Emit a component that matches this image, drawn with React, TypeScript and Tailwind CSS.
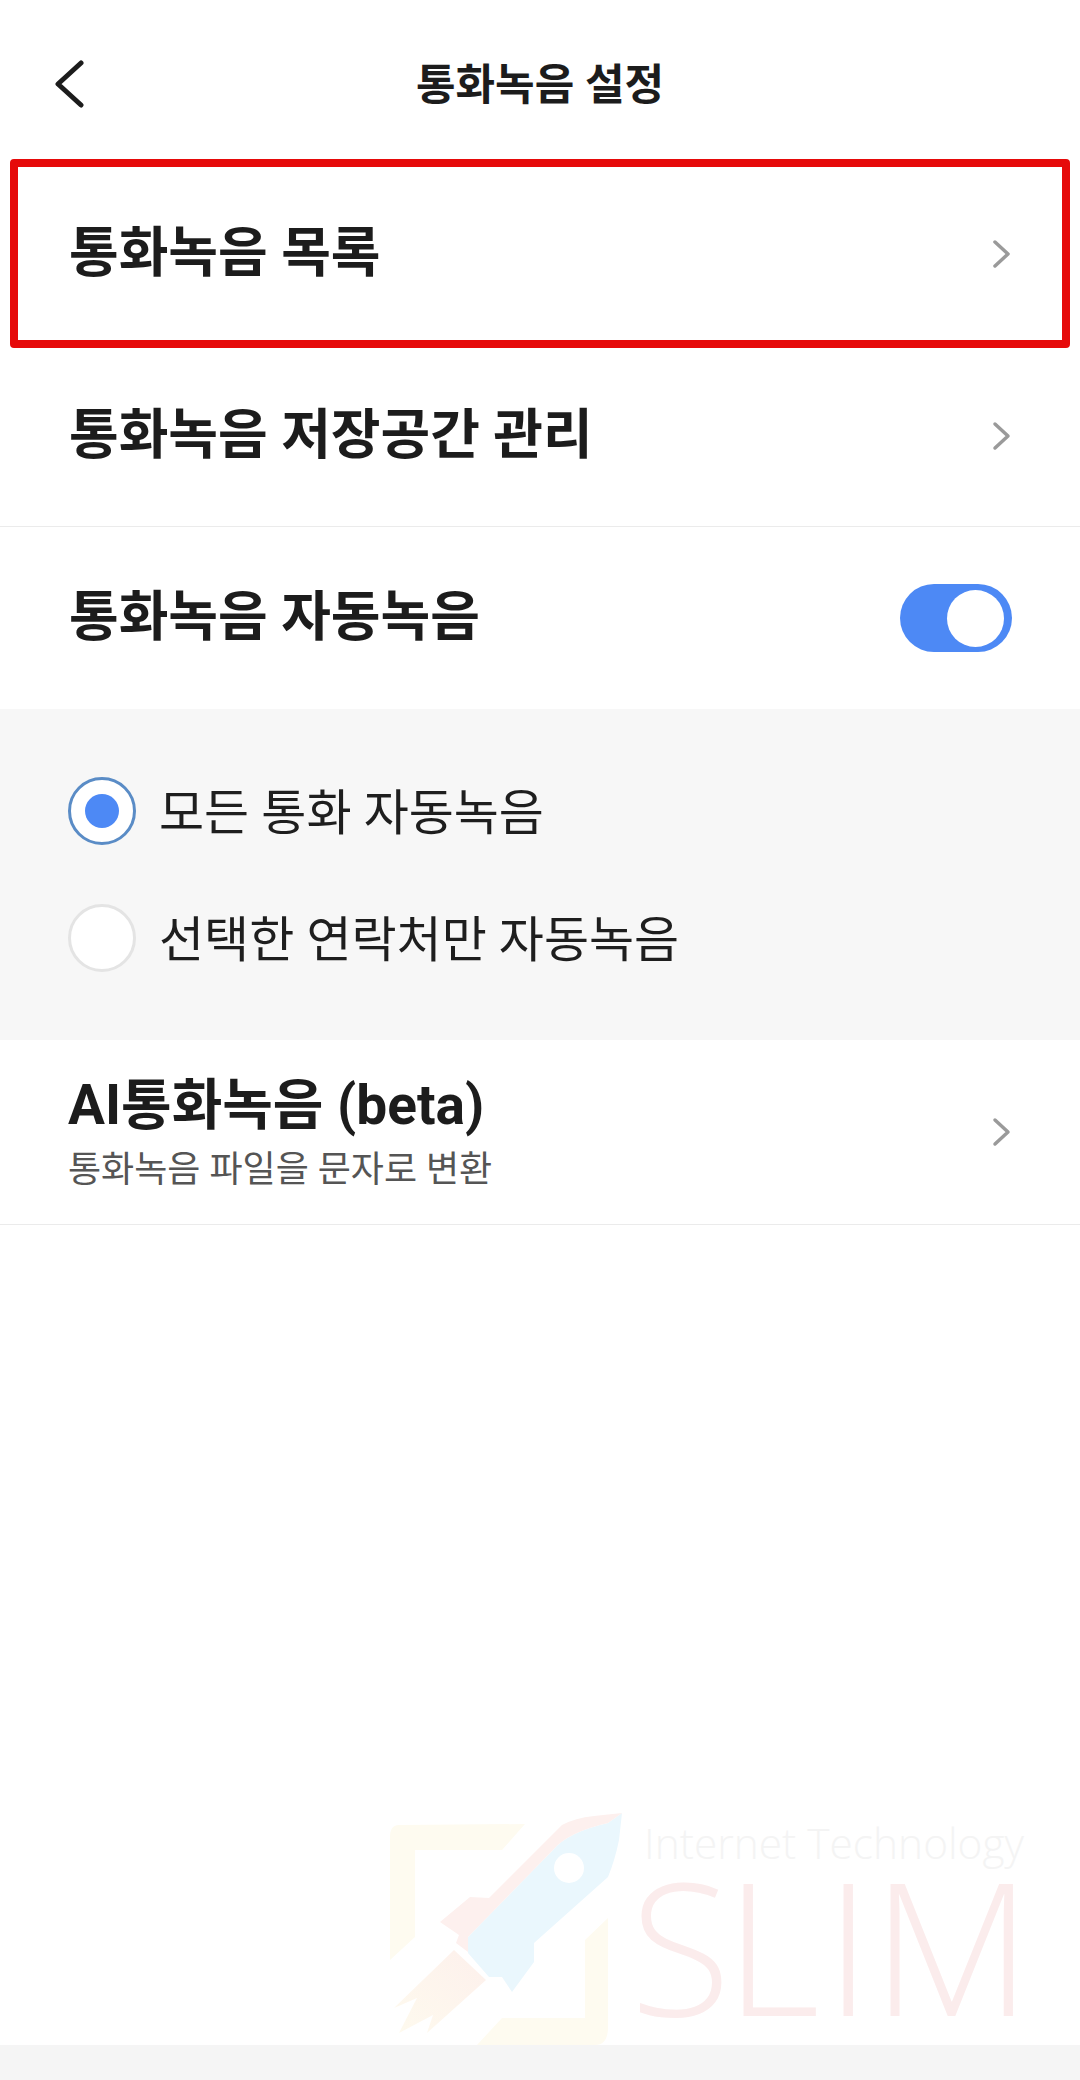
const titleFont = "font-['Roboto','Noto_Sans_CJK_KR',sans-serif]";

function BackIcon() {
  return (
    <svg viewBox="0 0 30 48" fill="none" stroke="#1c1c1c" strokeWidth="5" strokeLinecap="round" strokeLinejoin="round" className="h-[48px] w-[30px]">
      <polyline points="27,3 4,24 27,45" />
    </svg>
  );
}

function Chevron() {
  return (
    <svg viewBox="0 0 20 30" fill="none" stroke="#9a9a9a" strokeWidth="3.5" strokeLinecap="round" strokeLinejoin="round" className="h-[30px] w-[20px] shrink-0">
      <polyline points="3,3 16,15 3,27" />
    </svg>
  );
}

function Radio({ selected }: { selected?: boolean }) {
  return (
    <span className={`flex h-[68px] w-[68px] shrink-0 items-center justify-center rounded-full border-[3px] bg-white ${selected ? "border-[#5a8cc6]" : "border-[#e4e4e4]"}`}>
      {selected && <span className="h-[34px] w-[34px] rounded-full bg-[#4d89f5]" />}
    </span>
  );
}

function Row({ label, border, children }: { label: string; border?: boolean; children?: React.ReactNode }) {
  return (
    <div className={`flex h-[182px] items-center justify-between pl-[69px] pr-[68px] ${border ? "border-b border-[#ebebeb]" : ""}`}>
      <span className={`${titleFont} text-[54px] font-bold leading-none text-[#1c1c1c]`}>{label}</span>
      {children}
    </div>
  );
}

// faded watermark in the bottom right corner
function Watermark() {
  return (
    <svg viewBox="0 0 720 300" className="absolute left-[360px] top-[1780px] h-[300px] w-[720px]">
      <defs>
        <linearGradient id="flame" x1="1" y1="0" x2="0" y2="1">
          <stop offset="0" stopColor="#fdf0ec" />
          <stop offset="1" stopColor="#fefaee" />
        </linearGradient>
      </defs>
      <path d="M39 45 L165 44 L142 70 L55 70 L55 157 L30 180 L30 57 Q30 45 39 45 Z" fill="#fefbf0" />
      <path d="M248 138 L248 247 Q248 265 235 265 L117 265 L142 238 L225 238 L225 160 Z" fill="#fefbf0" />
      <path d="M262 33 L259 60 Q255 80 248 97 L174 163 L174 182 L152 212 L142 197 L129 197 L108 173 L108 157 L193 70 Q208 52 248 43 Z" fill="#eaf7fd" />
      <path d="M262 33 L234 36 Q215 38 202 45 L129 118 L110 117 L80 142 L99 155 L96 163 L108 172 L108 157 L193 70 Q208 52 248 43 Z" fill="#fdf0ee" />
      <circle cx="209" cy="88" r="15" fill="#ffffff" />
      <path d="M94 170 L126 200 L67 253 L73 235 L39 253 L57 218 L34 228 Z" fill="url(#flame)" />
      <text x="284" y="79" className="font-['Open_Sans',sans-serif] font-light" fontSize="42" fill="#f4f4f4" textLength="380" lengthAdjust="spacingAndGlyphs">
        Internet Technology
      </text>
      <text x="270 365 465 512" y="236" className="font-['Open_Sans',sans-serif] font-light" fontSize="185" fill="#fbecec">
        SLIM
      </text>
    </svg>
  );
}

export default function App() {
  return (
    <div className={`relative flex h-[2080px] w-[1080px] flex-col overflow-hidden bg-white ${titleFont}`}>
      <header className="relative flex h-[163px] shrink-0 items-start justify-center pt-[61px]">
        <span className="absolute left-[54px] top-[60px]">
          <BackIcon />
        </span>
        <h1 className="text-[43px] font-bold leading-[48px] text-[#1c1c1c]">통화녹음 설정</h1>
      </header>

      <Row label="통화녹음 목록">
        <Chevron />
      </Row>
      <Row label="통화녹음 저장공간 관리" border>
        <Chevron />
      </Row>
      <Row label="통화녹음 자동녹음">
        <span className="flex h-[68px] w-[112px] items-center justify-end rounded-full bg-[#4d89f5] pr-[8px]">
          <span className="h-[57px] w-[57px] rounded-full bg-white" />
        </span>
      </Row>

      <div className="flex h-[331px] shrink-0 flex-col justify-center gap-[59px] bg-[#f7f7f7] pl-[68px]">
        <label className="flex items-center gap-[23px] text-[49px] leading-none text-[#1e1e1e]">
          <Radio selected />
          <span className="pt-[4px]">모든 통화 자동녹음</span>
        </label>
        <label className="flex items-center gap-[23px] text-[49px] leading-none text-[#1e1e1e]">
          <Radio />
          <span className="pt-[4px]">선택한 연락처만 자동녹음</span>
        </label>
      </div>

      <div className="flex h-[185px] shrink-0 items-center justify-between border-b border-[#ebebeb] pl-[68px] pr-[68px]">
        <div className="flex flex-col gap-[17px] pt-[2px]">
          <span className="text-[55px] font-bold leading-[56px] text-[#1c1c1c]">AI통화녹음 (beta)</span>
          <span className="text-[36px] leading-[40px] text-[#555555]">통화녹음 파일을 문자로 변환</span>
        </div>
        <Chevron />
      </div>

      <div className="flex-1" />
      <div className="h-[35px] shrink-0 bg-[#f5f5f5]" />

      <Watermark />
      <div className="pointer-events-none absolute left-[10px] top-[159px] h-[189px] w-[1060px] rounded-[4px] border-[8px] border-[#e60a0a]" />
    </div>
  );
}
